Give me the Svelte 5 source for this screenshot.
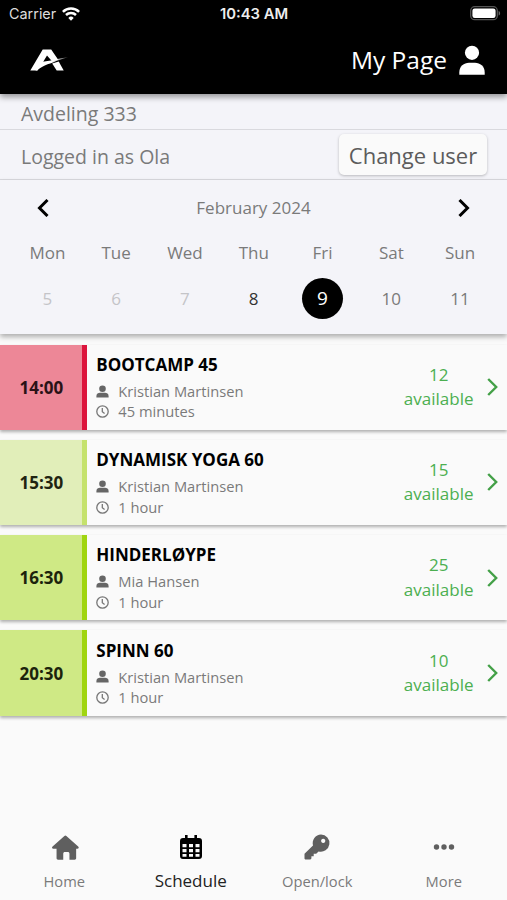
<script>
	let selectedDay = $state(9);
	let activeTab = $state('Schedule');

	const days = [
		{ name: 'Mon', date: 5, state: 'past' },
		{ name: 'Tue', date: 6, state: 'past' },
		{ name: 'Wed', date: 7, state: 'past' },
		{ name: 'Thu', date: 8, state: 'today' },
		{ name: 'Fri', date: 9, state: 'future' },
		{ name: 'Sat', date: 10, state: 'future' },
		{ name: 'Sun', date: 11, state: 'future' }
	];

	const classes = [
		{ time: '14:00', title: 'BOOTCAMP 45', trainer: 'Kristian Martinsen', duration: '45 minutes', available: 12, theme: 'red' },
		{ time: '15:30', title: 'DYNAMISK YOGA 60', trainer: 'Kristian Martinsen', duration: '1 hour', available: 15, theme: 'pale' },
		{ time: '16:30', title: 'HINDERLØYPE', trainer: 'Mia Hansen', duration: '1 hour', available: 25, theme: 'lime' },
		{ time: '20:30', title: 'SPINN 60', trainer: 'Kristian Martinsen', duration: '1 hour', available: 10, theme: 'lime' }
	];

	const tabs = ['Home', 'Schedule', 'Open/lock', 'More'];
</script>

<div class="app">
	<header>
		<div class="status-bar">
			<div class="carrier">
				<span>Carrier</span>
				<svg viewBox="0 0 18 14" width="18" height="14" fill="none" stroke="#fff" stroke-width="2.5">
					<path d="M.9 4.9a11.5 11.5 0 0 1 16.2 0"></path>
					<path d="M4 8a7.1 7.1 0 0 1 10 0"></path>
					<path d="M9 13.7l-2.7-2.8a3.8 3.8 0 0 1 5.4 0z" fill="#fff" stroke="none"></path>
				</svg>
			</div>
			<span class="clock">10:43 AM</span>
			<div class="battery">
				<svg viewBox="0 0 31 15" width="31" height="15">
					<rect x=".7" y=".7" width="26.6" height="13" rx="4" fill="none" stroke="#555" stroke-width="1.3"></rect>
					<rect x="2.4" y="2.4" width="23.2" height="9.6" rx="2.3" fill="#fff"></rect>
					<path d="M28.6 5c2 .6 2 4 0 4.6z" fill="#666"></path>
				</svg>
			</div>
		</div>
		<div class="top-bar">
			<svg class="logo" viewBox="0 0 38 22" width="38" height="22">
				<defs>
					<linearGradient id="swoosh" x1="0" x2="1">
						<stop offset="0.5" stop-color="#fff"></stop>
						<stop offset="1" stop-color="#fff" stop-opacity="0.3"></stop>
					</linearGradient>
				</defs>
				<path d="M.3 21.400L12.700.4h8.500l7 10.400-6.200 1.500L17 6.400l-4.200 7.200L7.300 21.400z" fill="#fff"></path>
				<path d="M5.500 21.400L11.500 12.800C19 12.200 29 9.300 38 8.200c-6 1.500-10.500 3.400-15 5.200C15 16 10.500 18 7.300 21.400z" fill="url(#swoosh)"></path>
				<path d="M22.200 14.600l6.500-2.200 5 9h-7z" fill="#fff"></path>
			</svg>
			<div class="my-page">
				<span>My Page</span>
				<svg viewBox="0 0 26 30" width="26" height="30" fill="#fff">
					<circle cx="13" cy="7.800" r="7.100"></circle>
					<path d="M.3 29.700V27.500C.3 21.200 5 17.800 10 17.800h6c5 0 9.700 3.400 9.700 9.700v2.200z"></path>
				</svg>
			</div>
		</div>
	</header>

	<div class="department">Avdeling 333</div>
	<div class="user-row">
		<span>Logged in as Ola</span>
		<button>Change user</button>
	</div>

	<section class="calendar">
		<div class="month">
			<svg viewBox="0 0 12 18" width="12" height="18" fill="none" stroke="#000" stroke-width="3">
				<path d="M10.500 1L2.500 9l8 8"></path>
			</svg>
			<span>February 2024</span>
			<svg viewBox="0 0 12 18" width="12" height="18" fill="none" stroke="#000" stroke-width="3">
				<path d="M1.500 1l8 8-8 8"></path>
			</svg>
		</div>
		<div class="days">
			{#each days as day}
				<div class="day {day.state}" class:selected={day.date === selectedDay}>
					<span class="day-name">{day.name}</span>
					<span class="date">{day.date}</span>
				</div>
			{/each}
		</div>
	</section>

	<main>
		{#each classes as item}
			<article class={item.theme}>
				<div class="time">{item.time}</div>
				<div class="details">
					<h2>{item.title}</h2>
					<div class="meta">
						<svg viewBox="0 0 13 13" width="13" height="13" fill="#666">
							<circle cx="6.500" cy="3.700" r="3.300"></circle>
							<path d="M.4 12.500v-1.500c0-2 1.800-3.200 3.600-3.200h5c1.800 0 3.600 1.200 3.600 3.200v1.500z"></path>
						</svg>
						<span>{item.trainer}</span>
					</div>
					<div class="meta">
						<svg viewBox="0 0 13 13" width="13" height="13" fill="none" stroke="#777" stroke-width="1.300">
							<circle cx="6.500" cy="6.500" r="5.700"></circle>
							<path d="M6.300 3v3.800l2.300 1.800"></path>
						</svg>
						<span>{item.duration}</span>
					</div>
				</div>
				<div class="available">{item.available}<br />available</div>
				<svg class="chevron" viewBox="0 0 11 18" width="11" height="18" fill="none" stroke="#43a047" stroke-width="2.400">
					<path d="M1.200 1l8 8-8 8"></path>
				</svg>
			</article>
		{/each}
	</main>

	<nav>
		{#each tabs as tab}
			<div class="tab" class:active={tab === activeTab}>
				<svg viewBox="0 0 28 26" width="28" height="26" fill="currentColor">
					{#if tab === 'Home'}
						<path transform="translate(1.800 .9) scale(.97)" d="M13 1.100a1.500 1.500 0 0 1 2 0L27.200 12c1.100 1 .5 2.200-.8 2.200h-1.300V24c0 .9-.6 1.500-1.500 1.500h-5.400v-6c0-1.200-.7-1.800-1.700-1.800h-3c-1 0-1.700.6-1.700 1.800v6H6.400c-.9 0-1.500-.6-1.500-1.500v-9.800H1.600c-1.300 0-1.900-1.200-.8-2.200z"></path>
					{:else if tab === 'Schedule'}
						<path fill-rule="evenodd" d="M8 1h2.600v3h6.800V1H20v3h2q3 0 3 3v15q0 3-3 3H6q-3 0-3-3V7q0-3 3-3h2zM5.500 10v3.200h4V10zm6.500 0v3.200h4V10zm6.500 0v3.200h4V10zM5.500 15v3.200h4V15zm6.500 0v3.200h4V15zm6.500 0v3.200h4V15zM5.500 20v2.800h4V20zm6.500 0v2.800h4V20zm6.500 0v2.800h4V20z"></path>
					{:else if tab === 'Open/lock'}
						<path fill-rule="evenodd" d="M18 .5a8.600 8.600 0 1 1-2.400 16.900l-2.400 2.300h-2.500v2.500H8.400v2.300l-1 .9H2.300q-.8 0-.8-.8v-4.800L10 11.400A8.600 8.600 0 0 1 18 .5zm2.200 4.300a2.100 2.100 0 1 0 .01 0z"></path>
					{:else}
						<circle cx="6.500" cy="13" r="2.700"></circle>
						<circle cx="14" cy="13" r="2.700"></circle>
						<circle cx="21.500" cy="13" r="2.700"></circle>
					{/if}
				</svg>
				<span>{tab}</span>
			</div>
		{/each}
	</nav>
</div>

<style>
	:global(body) {
		background: #fafafa;
	}

	.app {
		height: 900px;
		display: flex;
		flex-direction: column;
		overflow: hidden;
		font-family: 'Open Sans', 'Noto Sans', sans-serif;
		color: #7a7a7a;
	}

	header {
		height: 93.5px;
		flex-shrink: 0;
		background: #000;
		color: #fff;
		box-shadow: 0 3px 6px rgba(0, 0, 0, 0.4);
		z-index: 1;
	}

	.status-bar {
		height: 27px;
		padding: 0 6px 0 9px;
		display: grid;
		grid-template-columns: 1fr auto 1fr;
		align-items: center;
		font-family: Inter, sans-serif;
		font-size: 14.4px;
	}

	.carrier {
		display: flex;
		align-items: center;
		gap: 6px;
		color: #ddd;
	}

	.clock {
		margin-left: -2px;
		font-size: 14.8px;
		font-weight: 600;
		color: #eee;
	}

	.battery {
		display: flex;
		justify-content: flex-end;
	}

	.top-bar {
		height: 66px;
		padding: 0 22px 0 30px;
		display: flex;
		align-items: center;
		justify-content: space-between;
	}

	.my-page {
		display: flex;
		align-items: center;
		gap: 12px;
		font-size: 24.5px;
		line-height: 33px;
	}

	.my-page span {
		padding-bottom: 1px;
	}

	.department,
	.user-row {
		flex-shrink: 0;
		box-sizing: border-box;
		background: #f4f4f9;
		border-bottom: 1px solid #d9d9de;
		padding: 0 20px 0 21px;
		font-size: 19.5px;
	}

	.department {
		height: 36.5px;
		line-height: 40px;
	}

	.user-row {
		height: 50px;
		display: flex;
		align-items: center;
		justify-content: space-between;
	}

	.user-row span {
		padding-top: 4px;
	}

	button {
		width: 148px;
		height: 41px;
		padding: 0;
		border: 0;
		border-radius: 5px;
		background: #fafafa;
		box-shadow: 0 1px 3px rgba(0, 0, 0, 0.25);
		color: #5c5c5c;
		font-family: inherit;
		font-size: 22px;
	}

	.calendar {
		height: 154px;
		flex-shrink: 0;
		background: #f4f4f9;
		box-shadow: 0 3px 5px rgba(0, 0, 0, 0.3);
	}

	.month {
		height: 55px;
		padding: 0 37px;
		display: flex;
		align-items: center;
		justify-content: space-between;
		font-size: 17px;
	}

	.days {
		display: flex;
		padding: 0 12.5px 0 13px;
	}

	.day {
		flex: 1;
		display: flex;
		flex-direction: column;
		align-items: center;
		gap: 7px;
		font-size: 17px;
	}

	.day-name {
		line-height: 36px;
	}

	.date {
		width: 41px;
		height: 41px;
		line-height: 41px;
		border-radius: 50%;
		text-align: center;
	}

	.past .date {
		color: #c4c4c8;
	}

	.today .date {
		color: #333;
	}

	.selected .date {
		background: #000;
		color: #fff;
		font-size: 19px;
	}

	main {
		flex: 1;
		padding-top: 10.5px;
		display: flex;
		flex-direction: column;
		gap: 10px;
	}

	article {
		height: 85.3px;
		display: flex;
		align-items: center;
		background: #fafafa;
		box-shadow: 0 2px 3px rgba(0, 0, 0, 0.3);
	}

	.time {
		box-sizing: border-box;
		width: 86.7px;
		align-self: stretch;
		display: flex;
		align-items: center;
		justify-content: center;
		padding-left: 1px;
		border-right: 5px solid;
		font-size: 17px;
		font-weight: 700;
	}

	.red .time {
		background: #ed8797;
		border-color: #dc143c;
		color: #2b1216;
	}

	.pale .time {
		background: #e1eeb9;
		border-color: #c5e26d;
		color: #1f2411;
	}

	.lime .time {
		background: #cfe985;
		border-color: #a0d510;
		color: #1c230c;
	}

	.details {
		flex: 1;
		padding-left: 9.6px;
	}

	h2 {
		margin: 0 0 4px;
		padding-top: 0.5px;
		color: #000;
		font-size: 17px;
		line-height: 24px;
		font-weight: 700;
	}

	.meta {
		display: flex;
		align-items: center;
		gap: 9px;
		font-size: 14.7px;
		line-height: 20.7px;
	}

	.available {
		color: #4caf50;
		font-size: 17px;
		line-height: 24.5px;
		text-align: center;
	}

	.chevron {
		margin: 0 9.5px 0 13px;
	}

	nav {
		height: 79px;
		flex-shrink: 0;
		display: flex;
		padding-left: 1px;
		background: #fafafa;
	}

	.tab {
		flex: 1;
		display: flex;
		flex-direction: column;
		align-items: center;
		padding-top: 13px;
		font-size: 14.7px;
	}

	.tab svg {
		color: #5f5f5f;
		overflow: visible;
	}

	.tab span {
		line-height: 20px;
		margin-top: 11px;
	}

	.tab.active {
		color: #222;
		font-size: 17px;
	}

	.tab.active svg {
		color: #000;
	}

	.tab.active span {
		margin-top: 10.5px;
	}
</style>
